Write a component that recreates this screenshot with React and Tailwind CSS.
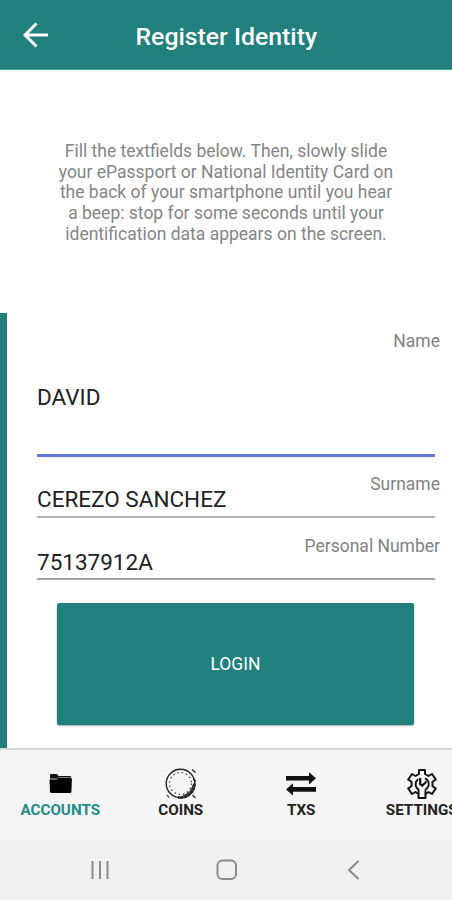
import React from "react";

const intro = [
  "Fill the textfields below. Then, slowly slide",
  "your ePassport or National Identity Card on",
  "the back of your smartphone until you hear",
  "a beep: stop for some seconds until your",
  "identification data appears on the screen.",
];

const BackArrow = () => (
  <svg width="26" height="26" viewBox="0 0 26 26" fill="none" stroke="white" strokeWidth="3">
    <path d="M25 13H2.5M13.5 1.5L2 13l11.5 11.5" />
  </svg>
);

const FolderIcon = () => (
  <svg width="30" height="30" viewBox="0 0 30 30">
    <path d="M5 10V6.2q0-1.2 1.2-1.2h5.3q1 0 1.4 1l.5 1H25q1.2 0 1.2 1.2V10z" fill="#111" />
    <path d="M5 9.8h6.500l2-1.300h12.700" fill="none" stroke="#999" strokeWidth="0.8" />
    <path d="M4.500 10.500h7l2-1.200h12.300q1.200 0 1.100 1.200l-.5 12q-.1 1.500-1.500 1.500H6.500Q5.100 24 5 22.500z" fill="#000" />
  </svg>
);

const CoinIcon = () => (
  <svg width="32" height="32" viewBox="0 0 32 32" fill="none" stroke="#222">
    <circle cx="15.500" cy="15.500" r="14.300" strokeWidth="1.400" />
    <circle cx="15.500" cy="15.500" r="11" strokeWidth="1.400" strokeDasharray="1.400 3" stroke="#444" />
    <path d="M29.500 15.500A14 14 0 0 1 13 29.300" strokeWidth="2.800" strokeDasharray="3 .8" />
    <path d="M28 17a12.500 12.500 0 0 1-10 10.500" strokeWidth="1.200" />
    <path d="M27 1.500l3.500 3M2 27l2 2.500M27.500 27l3 3M28 11l3 2" strokeWidth="1.200" />
  </svg>
);

const SwapIcon = () => (
  <svg width="30" height="30" viewBox="0 0 30 30" fill="#111">
    <path d="M0 7h23V3.200L30 9.300l-7 6.100v-3.800H0z" />
    <path d="M30 18.100H7v-3.800l-7 6.100 7 6.100v-3.800h23z" />
  </svg>
);

const GearIcon = () => (
  <svg width="30" height="30" viewBox="0 0 30 30" fill="none" stroke="#111" strokeWidth="2" strokeLinejoin="round">
    <path d="M12 1h6v4l3.500 2 3.500-2 3.800 5.500-3.300 2.300v4.400l3.300 2.300L25 25l-3.500-2-3 1.800V29h-7v-4.200l-3-1.800L5 25l-3.800-5.500 3.300-2.300v-4.400l-3.300-2.300L5 5l3.500 2L12 5z" />
    <path d="M11.500 25v-4.500a6.200 6.200 0 0 1-.3-10.300M18 9.400a6.200 6.200 0 0 1 .5 11.100V25" strokeWidth="1.800" />
    <path d="M13.200 9v6.200l2 1.500 4.300-4.200" strokeWidth="2.200" />
  </svg>
);

const tabs = [
  { label: "ACCOUNTS", Icon: FolderIcon, active: true },
  { label: "COINS", Icon: CoinIcon },
  { label: "TXS", Icon: SwapIcon },
  { label: "SETTINGS", Icon: GearIcon },
];

const Field = ({ label, value, className, labelClass, valueClass }) => (
  <div className={`flex justify-between ml-[30px] mr-[17px] ${className}`}>
    <span className={`text-[22.500px] leading-[26px] text-[#222] whitespace-nowrap ${valueClass}`}>{value}</span>
    <span className={`text-[17.500px] leading-5 text-[#828282] whitespace-nowrap -mr-[5px] ${labelClass}`}>{label}</span>
  </div>
);

const App = () => {
  return (
    <div className="flex flex-col w-[452px] h-[900px] overflow-hidden bg-white font-[Roboto,sans-serif]">
      {/* Header */}
      <header className="flex items-center shrink-0 h-[70px] bg-[#217f7d] border-b border-[#53a09d] pl-[23px]">
        <BackArrow />
        <h1 className="ml-[86.500px] mt-1 text-[24.800px] font-medium text-white whitespace-nowrap">Register Identity</h1>
      </header>

      {/* Instructions */}
      <div className="h-[243px] shrink-0 pt-[71px] text-center text-[17.500px] leading-[20.700px] text-[#858585]">
        {intro.map((line) => (
          <p key={line} className="whitespace-nowrap">{line}</p>
        ))}
      </div>

      {/* Form */}
      <main className="h-[435px] shrink-0 border-l-[7px] border-[#217f7d]">
        <Field
          label="Name"
          value="DAVID"
          className="h-[144px] border-b-[3px] border-[#6078d8]"
          labelClass="mt-[18px]"
          valueClass="mt-[71px]"
        />
        <Field
          label="Surname"
          value="CEREZO SANCHEZ"
          className="h-[61px] border-b-2 border-[#b5b5b5]"
          labelClass="mt-[17px]"
          valueClass="mt-[29px]"
        />
        <Field
          label="Personal Number"
          value="75137912A"
          className="h-[62px] border-b-2 border-[#a0a0a0]"
          labelClass="mt-[18px]"
          valueClass="mt-[31px]"
        />
        <button className="block ml-[50px] mt-[23px] w-[357px] h-[122px] rounded-xs bg-[#217f7d] text-white text-[17.500px] shadow-[0_1px_2px_rgba(0,0,0,0.35)]">
          LOGIN
        </button>
      </main>

      {/* Tab bar */}
      <nav className="flex shrink-0 h-[92px] bg-[#f5f5f5] border-t-2 border-[#d6d6d6]">
        {tabs.map(({ label, Icon, active }) => (
          <div key={label} className="flex flex-col items-center shrink-0 w-[120.500px] pt-[19px]">
            <div className="flex items-center justify-center h-[30px]">
              <Icon />
            </div>
            <span className={`mt-[2px] text-[15.200px] leading-[18px] font-bold ${active ? "text-[#218c88]" : "text-[#222]"}`}>
              {label}
            </span>
          </div>
        ))}
      </nav>

      {/* System buttons */}
      <footer className="flex items-center justify-between h-[60px] shrink-0 bg-[#f1f1f1] pl-[90px] pr-[92px]">
        <svg width="20" height="20" viewBox="0 0 20 20" stroke="#8c8c8c" strokeWidth="2">
          <path d="M2.500 1v18M10 1v18M17.500 1v18" />
        </svg>
        <svg className="-ml-[4px]" width="22" height="22" viewBox="0 0 22 22" fill="none" stroke="#8c8c8c" strokeWidth="2">
          <rect x="1.500" y="1.500" width="18.500" height="18.500" rx="5" />
        </svg>
        <svg width="13" height="20" viewBox="0 0 13 20" fill="none" stroke="#8c8c8c" strokeWidth="2">
          <path d="M11.500 1L2 10l9.500 9" />
        </svg>
      </footer>
    </div>
  );
};

export default App;
